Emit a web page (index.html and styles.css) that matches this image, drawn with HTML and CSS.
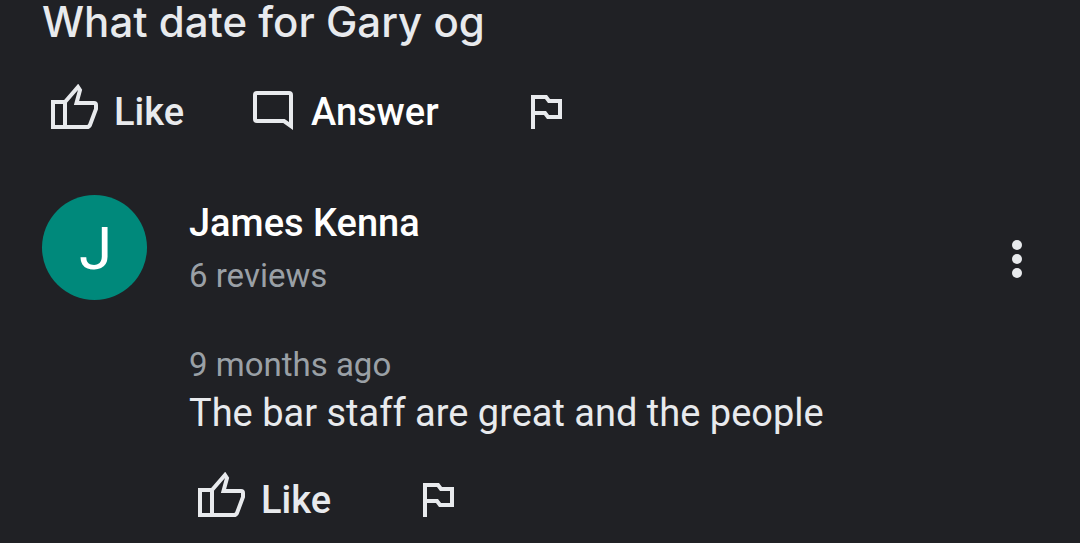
FILE: index.html
```html
<!DOCTYPE html>
<html lang="en">
<head>
<meta charset="utf-8">
<meta name="viewport" content="width=device-width, initial-scale=1">
<title>Questions and reviews</title>
<link rel="stylesheet" href="styles.css">
</head>
<body>
<svg class="symbols" aria-hidden="true">
  <symbol id="thumb" viewBox="10 8 50 48"><path d="M25 51V26H13V51H47Q49 51 50 49L56 33V29Q56 27 54 27H36.500L40 14L38 11L25 26"/></symbol>
  <symbol id="comment" viewBox="0 0 40 40"><path d="M4 2H36Q38 2 38 4V35L31 30H4Q2 30 2 28V4Q2 2 4 2Z"/></symbol>
  <symbol id="flag" viewBox="0 0 32 34"><path d="M2 34V2H15L18 6H29V22H17L14 18H2"/></symbol>
</svg>
<main class="feed">
  <article class="question">
    <h1 class="question-text">What date for Gary og</h1>
    <div class="actions">
      <button class="action" type="button"><svg class="icon thumb" aria-hidden="true"><use href="#thumb"/></svg>Like</button>
      <button class="action answer" type="button"><svg class="icon comment" aria-hidden="true"><use href="#comment"/></svg>Answer</button>
      <button class="action report" type="button" aria-label="Report question"><svg class="icon flag" aria-hidden="true"><use href="#flag"/></svg></button>
    </div>
  </article>
  <article class="review">
    <div class="avatar" aria-hidden="true">J</div>
    <div class="body">
      <header class="author">
        <div class="identity">
          <h2 class="name">James Kenna</h2>
          <p class="meta">6 reviews</p>
        </div>
        <button class="more" type="button" aria-label="More options"><svg class="dots" viewBox="0 0 10 38" aria-hidden="true"><circle cx="5" cy="5" r="5"/><circle cx="5" cy="19" r="5"/><circle cx="5" cy="33" r="5"/></svg></button>
      </header>
      <p class="meta">9 months ago</p>
      <p class="text">The bar staff are great and the people</p>
      <div class="actions">
        <button class="action" type="button"><svg class="icon thumb" aria-hidden="true"><use href="#thumb"/></svg>Like</button>
        <button class="action report" type="button" aria-label="Report review"><svg class="icon flag" aria-hidden="true"><use href="#flag"/></svg></button>
      </div>
    </div>
  </article>
</main>
</body>
</html>
```
FILE: styles.css
```css
* {
  box-sizing: border-box;
}

body {
  margin: 0;
  background: #202125;
  color: #e8eaed;
  font-family: Roboto, "Liberation Sans", sans-serif;
}

h1, h2, p {
  margin: 0;
}

button {
  padding: 0;
  border: 0;
  background: none;
  color: inherit;
  font: inherit;
}

.symbols {
  position: absolute;
  width: 0;
  height: 0;
}

.feed {
  padding: 0 42px;
}

.question-text {
  font-family: Inter, Roboto, sans-serif;
  font-size: 42px;
  font-weight: 500;
  line-height: 44px;
}

.actions {
  display: flex;
  align-items: center;
  padding-left: 8px;
}

.question .actions {
  margin-top: 40px;
}

.action {
  display: flex;
  align-items: center;
  gap: 14px;
  font-size: 38px;
  font-weight: 500;
  line-height: 48px;
}

.answer {
  gap: 18px;
  margin-left: 69px;
  color: #fff;
}

.report {
  margin-left: 92px;
}

.icon {
  fill: none;
  stroke: #e8eaed;
  stroke-width: 4px;
}

.thumb {
  width: 50px;
  height: 48px;
  margin-bottom: 8px;
}

.comment {
  width: 40px;
  height: 40px;
  margin-bottom: 2px;
}

.flag {
  width: 32px;
  height: 34px;
}

.review {
  display: flex;
  gap: 42px;
  margin-top: 55px;
}

.avatar {
  display: flex;
  flex: none;
  align-items: center;
  justify-content: center;
  width: 105px;
  height: 105px;
  padding: 2px 0 0 2px;
  border-radius: 50%;
  background: #00897b;
  color: #fff;
  font-size: 60px;
}

.body {
  flex: 1;
}

.author {
  display: flex;
  align-items: center;
  justify-content: space-between;
  padding-top: 4px;
}

.name {
  color: #fff;
  font-size: 38px;
  font-weight: 500;
  line-height: 48px;
}

.meta {
  color: #9aa0a6;
  font-size: 33px;
  line-height: 48px;
}

.author .meta {
  margin-top: 5px;
}

.author + .meta {
  margin-top: 41px;
}

.more {
  display: flex;
  padding: 10px;
  margin-top: 18px;
  margin-right: 6px;
}

.dots {
  width: 10px;
  height: 38px;
  fill: #e8eaed;
}

.text {
  font-size: 38px;
  line-height: 48px;
}

.body .actions {
  margin-top: 35px;
}
```
